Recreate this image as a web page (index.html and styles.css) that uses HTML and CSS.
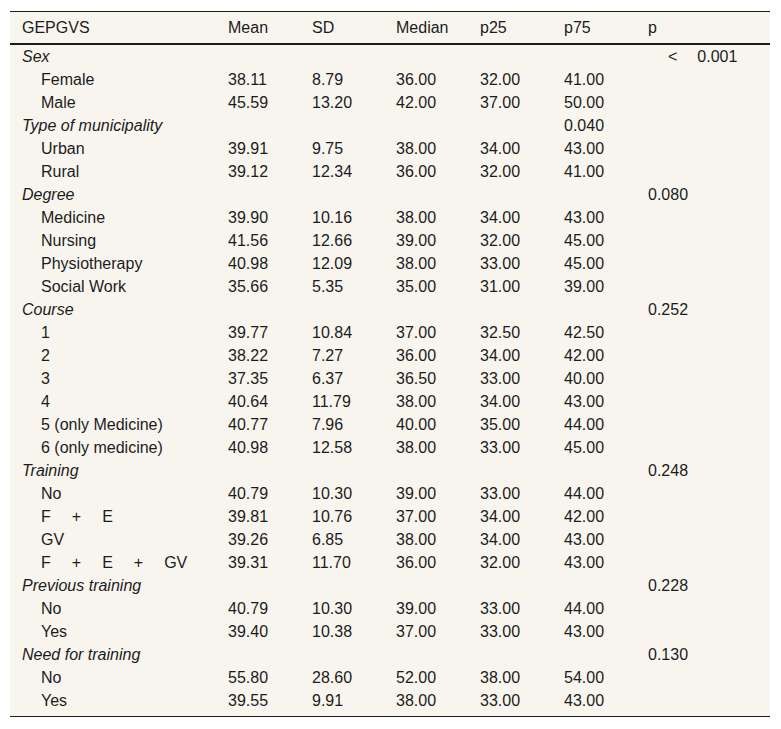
FILE: index.html
```html
<!DOCTYPE html>
<html>
<head>
<meta charset="utf-8">
<link rel="stylesheet" href="styles.css">
</head>
<body>
<div class="wrap">
<table class="tbl">
<colgroup>
<col class="c1"><col class="cn"><col class="cn"><col class="cn"><col class="cn"><col class="cn"><col class="cl">
</colgroup>
<thead>
<tr><th>GEPGVS</th><th>Mean</th><th>SD</th><th>Median</th><th>p25</th><th>p75</th><th>p</th></tr>
</thead>
<tbody>
<tr><td class="grp">Sex</td><td></td><td></td><td></td><td></td><td></td><td><span class="lt">&lt;</span><span class="pv">0.001</span></td></tr>
<tr><td class="sub">Female</td><td>38.11</td><td>8.79</td><td>36.00</td><td>32.00</td><td>41.00</td><td></td></tr>
<tr><td class="sub">Male</td><td>45.59</td><td>13.20</td><td>42.00</td><td>37.00</td><td>50.00</td><td></td></tr>
<tr><td class="grp">Type of municipality</td><td></td><td></td><td></td><td></td><td>0.040</td><td></td></tr>
<tr><td class="sub">Urban</td><td>39.91</td><td>9.75</td><td>38.00</td><td>34.00</td><td>43.00</td><td></td></tr>
<tr><td class="sub">Rural</td><td>39.12</td><td>12.34</td><td>36.00</td><td>32.00</td><td>41.00</td><td></td></tr>
<tr><td class="grp">Degree</td><td></td><td></td><td></td><td></td><td></td><td>0.080</td></tr>
<tr><td class="sub">Medicine</td><td>39.90</td><td>10.16</td><td>38.00</td><td>34.00</td><td>43.00</td><td></td></tr>
<tr><td class="sub">Nursing</td><td>41.56</td><td>12.66</td><td>39.00</td><td>32.00</td><td>45.00</td><td></td></tr>
<tr><td class="sub">Physiotherapy</td><td>40.98</td><td>12.09</td><td>38.00</td><td>33.00</td><td>45.00</td><td></td></tr>
<tr><td class="sub">Social Work</td><td>35.66</td><td>5.35</td><td>35.00</td><td>31.00</td><td>39.00</td><td></td></tr>
<tr><td class="grp">Course</td><td></td><td></td><td></td><td></td><td></td><td>0.252</td></tr>
<tr><td class="sub">1</td><td>39.77</td><td>10.84</td><td>37.00</td><td>32.50</td><td>42.50</td><td></td></tr>
<tr><td class="sub">2</td><td>38.22</td><td>7.27</td><td>36.00</td><td>34.00</td><td>42.00</td><td></td></tr>
<tr><td class="sub">3</td><td>37.35</td><td>6.37</td><td>36.50</td><td>33.00</td><td>40.00</td><td></td></tr>
<tr><td class="sub">4</td><td>40.64</td><td>11.79</td><td>38.00</td><td>34.00</td><td>43.00</td><td></td></tr>
<tr><td class="sub">5 (only Medicine)</td><td>40.77</td><td>7.96</td><td>40.00</td><td>35.00</td><td>44.00</td><td></td></tr>
<tr><td class="sub">6 (only medicine)</td><td>40.98</td><td>12.58</td><td>38.00</td><td>33.00</td><td>45.00</td><td></td></tr>
<tr><td class="grp">Training</td><td></td><td></td><td></td><td></td><td></td><td>0.248</td></tr>
<tr><td class="sub">No</td><td>40.79</td><td>10.30</td><td>39.00</td><td>33.00</td><td>44.00</td><td></td></tr>
<tr><td class="sub"><span class="tk">F</span><span class="tk">+</span><span class="tk">E</span></td><td>39.81</td><td>10.76</td><td>37.00</td><td>34.00</td><td>42.00</td><td></td></tr>
<tr><td class="sub">GV</td><td>39.26</td><td>6.85</td><td>38.00</td><td>34.00</td><td>43.00</td><td></td></tr>
<tr><td class="sub"><span class="tk">F</span><span class="tk">+</span><span class="tk">E</span><span class="tk">+</span><span class="tk">GV</span></td><td>39.31</td><td>11.70</td><td>36.00</td><td>32.00</td><td>43.00</td><td></td></tr>
<tr><td class="grp">Previous training</td><td></td><td></td><td></td><td></td><td></td><td>0.228</td></tr>
<tr><td class="sub">No</td><td>40.79</td><td>10.30</td><td>39.00</td><td>33.00</td><td>44.00</td><td></td></tr>
<tr><td class="sub">Yes</td><td>39.40</td><td>10.38</td><td>37.00</td><td>33.00</td><td>43.00</td><td></td></tr>
<tr><td class="grp">Need for training</td><td></td><td></td><td></td><td></td><td></td><td>0.130</td></tr>
<tr><td class="sub">No</td><td>55.80</td><td>28.60</td><td>52.00</td><td>38.00</td><td>54.00</td><td></td></tr>
<tr class="last"><td class="sub">Yes</td><td>39.55</td><td>9.91</td><td>38.00</td><td>33.00</td><td>43.00</td><td></td></tr>
</tbody>
</table>
</div>
</body>
</html>
```
FILE: styles.css
```css
html, body {
  margin: 0;
  padding: 0;
  background: #ffffff;
}
.wrap {
  padding: 11px 11px 0 10px;
}
.tbl {
  width: 760px;
  border-collapse: collapse;
  table-layout: fixed;
  background: #f8f5ef;
  font-family: "Liberation Sans", Arial, sans-serif;
  font-size: 16px;
  color: #1c1c1c;
  border-top: 1px solid #1c1c1c;
  border-bottom: 1px solid #1c1c1c;
}
.c1 { width: 206px; }
.cn { width: 84px; }
.cl { width: 134px; }
.tbl th {
  font-weight: normal;
  text-align: left;
  height: 31px;
  padding: 0 0 0 12px;
  line-height: 18px;
  border-bottom: 2px solid #1c1c1c;
  vertical-align: middle;
}
.tbl td {
  height: 22px;
  padding: 1px 0 0 12px;
  line-height: 18px;
  white-space: nowrap;
  vertical-align: middle;
}
.tbl tr.last td {
  height: 24px;
  vertical-align: top;
  padding-top: 3px;
}
.tbl td.grp {
  font-style: italic;
}
.tbl td.sub {
  padding-left: 31px;
}
.tk {
  display: inline-block;
  margin-right: 21px;
}
.tk:last-child { margin-right: 0; }
.lt {
  display: inline-block;
  margin-left: 20px;
  margin-right: 20px;
}
```
